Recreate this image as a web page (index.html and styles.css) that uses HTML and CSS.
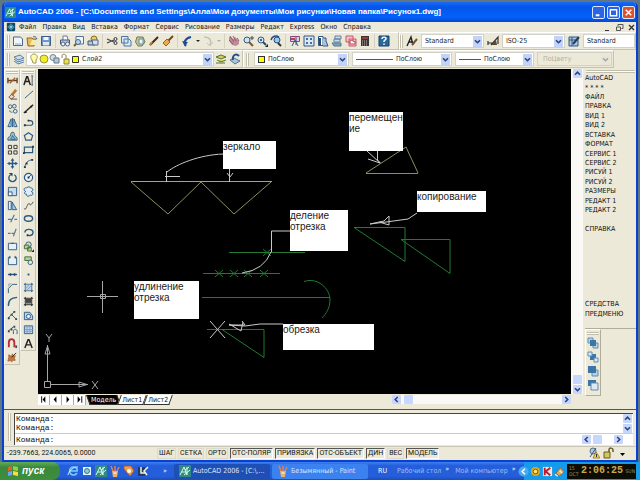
FILE: index.html
```
<!DOCTYPE html>
<html lang="ru">
<head>
<meta charset="utf-8">
<title>AutoCAD 2006</title>
<link rel="stylesheet" href="styles.css">
</head>
<body>
<svg class="defs" aria-hidden="true">
  <symbol id="down" viewBox="0 0 9 9"><path d="M2 3.200 4.500 5.700 7 3.200" fill="none" stroke="#2c4378" stroke-width="1.600"/></symbol>
  <symbol id="up" viewBox="0 0 9 9"><path d="M2 5.700 4.500 3.200 7 5.700" fill="none" stroke="#2c4378" stroke-width="1.600"/></symbol>
  <symbol id="left" viewBox="0 0 9 9"><path d="M5.700 2 3.200 4.500 5.700 7" fill="none" stroke="#2c4378" stroke-width="1.600"/></symbol>
  <symbol id="right" viewBox="0 0 9 9"><path d="M3.200 2 5.700 4.500 3.200 7" fill="none" stroke="#2c4378" stroke-width="1.600"/></symbol>
  <symbol id="acad" viewBox="0 0 12 12"><rect width="12" height="12" fill="#2f8a86"/><path d="M1 10 5 2 8 10M3 7h4M8 2v8M6 5l4-3M5 10l6-5" fill="none" stroke="#d8fbe8" stroke-width="1"/></symbol>
  <symbol id="paint" viewBox="0 0 12 12"><path d="M3 6h6L8 12H4z" fill="#e9b26a"/><path d="M4 6 2 1M6 6V1M8 6l2-4" stroke="#e5804c" stroke-width="1.500"/><path d="M4.500 8h3" stroke="#fff"/></symbol>
</svg>
<div class="window">
  <header class="title">
    <svg class="ic"><use href="#acad"/></svg>
    <h1>AutoCAD 2006 - [C:\Documents and Settings\Алла\Мои документы\Мои рисунки\Новая папка\Рисунок1.dwg]</h1>
    <div class="winbtns">
      <button aria-label="Свернуть"><svg viewBox="0 0 12 12"><path d="M3 9h4" stroke="#fff" stroke-width="2"/></svg></button>
      <button aria-label="Развернуть"><svg viewBox="0 0 12 12"><path d="M2.500 3v6.500h7V3M2 3h8" fill="none" stroke="#fff" stroke-width="1.500"/></svg></button>
      <button class="close" aria-label="Закрыть"><svg viewBox="0 0 12 12"><path d="m3 3 6 6M9 3 3 9" stroke="#fff" stroke-width="1.600"/></svg></button>
    </div>
  </header>
  <nav class="menu">
    <svg class="ic" viewBox="0 0 12 12"><rect x="1" y="1" width="10" height="10" rx="1" fill="#0d4a6c"/><path d="M6 2v8M2 6h8M4 4l4 4M8 4 4 8" stroke="#8fd8e0"/></svg>
    <button>Файл</button><button>Правка</button><button>Вид</button><button>Вставка</button><button>Формат</button><button>Сервис</button><button>Рисование</button><button>Размеры</button><button>Редакт</button><button>Express</button><button>Окно</button><button>Справка</button>
    <div class="docbtns">
      <button aria-label="Свернуть рисунок"><svg viewBox="0 0 9 9"><path d="M2 7.500h4" stroke="#333"/></svg></button>
      <button aria-label="Восстановить рисунок"><svg viewBox="0 0 9 9"><path d="M3 3V1.500h5v4H6.500M1.500 4h4v3.500h-4z" fill="none" stroke="#555"/></svg></button>
      <button aria-label="Закрыть рисунок"><svg viewBox="0 0 9 9"><path d="m2 2 5 5M7 2 2 7" stroke="#333" stroke-width="1.300"/></svg></button>
    </div>
  </nav>

  <div class="bar">
    <div class="strip standard">
      <i class="grip"></i>
      <div class="group">
        <button aria-label="Создать"><svg viewBox="0 0 12 12"><path d="M1.500 2h7l2 2v6.500h-9z" fill="#eef5fc" stroke="#49678f"/><path d="M3 8h6v2H3z" fill="#b9d1ea"/></svg></button>
        <button aria-label="Открыть"><svg viewBox="0 0 12 12"><path d="M1 3h5l1 1h3l-2 7H2z" fill="#e9bd57" stroke="#8f6a23"/><path d="m4 10 2-5h5L9 10z" fill="#fbe9a6"/><path d="M7 2c2-1 3 0 4 2" fill="none" stroke="#315b8e"/></svg></button>
        <button aria-label="Сохранить"><svg viewBox="0 0 12 12"><path d="M1.500 1.500h9v9h-9z" fill="#6f97c8" stroke="#3b5d90"/><path d="M3.500 2h5v3h-5z" fill="#f3f7fb"/><path d="M3 7h6v3.500H3z" fill="#dce7f2"/></svg></button>
      </div>
      <div class="group">
        <button aria-label="Печать"><svg viewBox="0 0 12 12"><path d="M4 5V1h4l1 4" fill="#fff" stroke="#657ba0"/><path d="M1.500 5h9v4h-9z" fill="#b9c8dd" stroke="#415575"/><circle cx="4" cy="9" r="2" fill="#eef" stroke="#526689"/><circle cx="8.500" cy="9" r="2" fill="#eef" stroke="#526689"/></svg></button>
        <button aria-label="Просмотр"><svg viewBox="0 0 12 12"><path d="M3 1.500h7.500V9H3z" fill="#edf4fb" stroke="#58739b"/><circle cx="5" cy="7" r="2.500" fill="#b8d6ef" stroke="#456386"/><path d="m3 9-2 2" stroke="#765b30" stroke-width="2"/></svg></button>
        <button aria-label="Публикация"><svg viewBox="0 0 12 12"><path d="M1 6h7v4H1z" fill="#b9c8dd" stroke="#415575"/><circle cx="7" cy="4" r="3" fill="#e8cc62" stroke="#876e31"/><path d="M5 5h6v5H6z" fill="#d5dfef" stroke="#526689"/></svg></button>
      </div>
      <div class="group">
        <button aria-label="Вырезать"><svg viewBox="0 0 12 12"><path d="m1 4 7 3M1 8l7-3" stroke="#444" stroke-width="1.300"/><circle cx="9.500" cy="4" r="1.500" fill="none" stroke="#334"/><circle cx="9.500" cy="8" r="1.500" fill="none" stroke="#334"/></svg></button>
        <button aria-label="Копировать"><svg viewBox="0 0 12 12"><path d="M1.500 1.500H8V8H1.500zM4 4h5l2 2v5H4z" fill="#dbe9f6" stroke="#5276a1"/></svg></button>
        <button aria-label="Вставить"><svg viewBox="0 0 12 12"><path d="M3 2h6l2 5-3 4H4L1.500 7z" fill="#c5c992" stroke="#6e7c55"/><path d="M5 4h4v5H5z" fill="#eff5fa" stroke="#6888a6"/></svg></button>
        <button aria-label="Свойства слоя"><svg viewBox="0 0 12 12"><path d="m2 10 8-8" stroke="#3d2a18" stroke-width="2"/><path d="m2 10 2-3" stroke="#c48328" stroke-width="2"/></svg></button>
        <button aria-label="Копирование свойств"><svg viewBox="0 0 12 12"><path d="m6 6 5-5" stroke="#6b4724" stroke-width="2"/><path d="m1 8 4-4 3 3-4 4z" fill="#ecae45" stroke="#9b6225"/></svg></button>
      </div>
      <div class="group">
        <button aria-label="Отменить"><svg viewBox="0 0 12 12"><path d="M5 11C2 8 4 3 10 2" fill="none" stroke="#1f4c94" stroke-width="2"/><path d="m1 6 3 5 3-4z" fill="#1f4c94"/></svg></button>
        <button class="dot" aria-label="Список отмены"><svg viewBox="0 0 6 12"><path d="M1 5h4L3 7z" fill="#222"/></svg></button>
        <button aria-label="Вернуть"><svg viewBox="0 0 12 12"><path d="M2 2c6 0 8 4 6 8" fill="none" stroke="#c4c3bb" stroke-width="1.500"/><path d="m5 8 3 3 3-4" fill="none" stroke="#c4c3bb"/></svg></button>
        <button class="dot" aria-label="Список возврата"><svg viewBox="0 0 6 12"><path d="M1 5h4L3 7z" fill="#aaa"/></svg></button>
      </div>
      <div class="group">
        <button aria-label="Панорамирование"><svg viewBox="0 0 12 12"><path d="m1 2 2 0 2 2 2-2 4 4v3l-3 2-4-1-3-4z" fill="#c08a97"/><path d="m2 1 4 6M5 1l3 5M1 5l4 4M9 3l2 3" stroke="#8a5c74"/></svg></button>
        <button aria-label="Зумирование"><svg viewBox="0 0 12 12"><circle cx="5" cy="5" r="3" fill="#cce3f4" stroke="#385a83"/><path d="m7 7 4 4" stroke="#7a592d" stroke-width="2"/><path d="M10 1v4M8 3h4" stroke="#394b66"/></svg></button>
        <button aria-label="Зумирование рамкой"><svg viewBox="0 0 12 12"><circle cx="5" cy="5" r="3" fill="#cce3f4" stroke="#385a83"/><path d="M4 4h2v2H4z" fill="#3e6b99"/><path d="m7 7 3 3" stroke="#38465f" stroke-width="2"/><path d="M12 9v3H9z" fill="#222"/></svg></button>
        <button aria-label="Предыдущий вид"><svg viewBox="0 0 12 12"><circle cx="7" cy="5" r="3" fill="#9bc7ea" stroke="#294d78"/><path d="m8 8 3 3" stroke="#333" stroke-width="2"/><path d="M1 5c1-4 5-5 8-3" fill="none" stroke="#244d86" stroke-width="1.500"/></svg></button>
      </div>
      <div class="group">
        <button aria-label="Свойства"><svg viewBox="0 0 12 12"><path d="M1.500 1.500h9v5h-9z" fill="#e8cce2" stroke="#7e4d85"/><path d="M2 3h4v2H2z" fill="#cc3b55"/><path d="m3 11 3-6 3 6M7 2v8" fill="none" stroke="#315787"/></svg></button>
        <button aria-label="Центр управления"><svg viewBox="0 0 12 12"><path d="M1 1h10v10H1z" fill="#dae7f5" stroke="#37587f"/><path d="M3 3h2v2H3zm4 0h2v2H7zM3 7h2v2H3zm4 0h2v2H7z" fill="#476f9d"/></svg></button>
        <button aria-label="Палитры"><svg viewBox="0 0 12 12"><path d="M1.500 1.500H6v9H1.500z" fill="#fff" stroke="#315787"/><path d="M6 3h3v3l2 5H6" fill="#a6c3e3" stroke="#315787"/><path d="M3 3v7" stroke="#234b7c" stroke-width="2"/></svg></button>
        <button aria-label="Подшивки"><svg viewBox="0 0 12 12"><path d="M4 1h6v3H4zM3 4h6v3H3z" fill="#d0ddea" stroke="#5f83a8"/><path d="M1 8h9v3H3z" fill="#7fa5b8" stroke="#54788d"/></svg></button>
        <button aria-label="Пометки"><svg viewBox="0 0 12 12"><path d="M1 1h7v6H1zM4 4h7v7H4z" fill="#f4c5cb" stroke="#c75669"/><path d="M5 6c2-2 4 2 5 0v3H5z" fill="#fff" stroke="#bb4252"/></svg></button>
        <button aria-label="Калькулятор"><svg viewBox="0 0 12 12"><path d="M2 1h8v10H2z" fill="#3b3434"/><path d="M3 2h6v2H3z" fill="#9b3940"/><path d="M3 6h6M3 8h6M3 10h6" stroke="#bab5b0" stroke-dasharray="1 1"/></svg></button>
      </div>
      <div class="group last">
        <button aria-label="Справка"><svg viewBox="0 0 12 12"><path d="M1 1h10v10H1z" fill="#286a9c" stroke="#173f70"/><path d="M4 4c0-3 5-2 4 0L6 6v1M6 8.500V10" fill="none" stroke="#fff" stroke-width="1.400"/></svg></button>
      </div>
    </div>
    <div class="strip styles">
      <i class="grip"></i>
      <label for="ts" aria-label="Стиль текста"><svg viewBox="0 0 12 12"><path d="m1 11 4-9 2 8M3 7h4" fill="none" stroke="#222" stroke-width="1.400"/><path d="m6 10 5-6" stroke="#765332" stroke-width="2"/></svg></label>
      <span class="combo w63"><select id="ts"><option>Standard</option></select><svg class="arr"><use href="#down"/></svg></span>
      <label for="ds" aria-label="Размерный стиль"><svg viewBox="0 0 12 12"><path d="M1 8h8M1 6v4M4 10l7-8v7" fill="none" stroke="#333" stroke-width="1.200"/><path d="m4 10 5-5 1 5z" fill="#5b4939"/></svg></label>
      <span class="combo w63"><select id="ds"><option>ISO-25</option></select><svg class="arr"><use href="#down"/></svg></span>
      <label for="tb" aria-label="Стиль таблиц"><svg viewBox="0 0 12 12"><path d="M1 2h9v9H1z" fill="#a9c8e6" stroke="#315985"/><path d="M1 5h9M4 2v9" stroke="#315985"/><path d="m5 9 6-7" stroke="#293b55" stroke-width="2"/></svg></label>
      <span class="combo grow"><select id="tb"><option>Standard</option></select></span>
    </div>
  </div>

  <div class="bar">
    <div class="strip layers">
      <i class="grip"></i>
      <button aria-label="Слои"><svg viewBox="0 0 12 12"><path d="m1 4 6-2 4 3-6 2zM1 6l4 3 6-2M1 8l4 3 6-2" fill="#c8dceb" stroke="#5d82a5"/></svg></button>
      <span class="combo layer">
        <svg class="state" viewBox="0 0 50 12"><path d="M3 7C0 3 3 1 5 1s5 2 2 6v3H4z" fill="#fffba7" stroke="#9a965a"/><circle cx="15" cy="6" r="4" fill="#f4ec27" stroke="#99963a"/><circle cx="24" cy="4.500" r="3" fill="#d3dde2" stroke="#71858f"/><path d="M25 5h5v5h-5z" fill="#b6c9d6" stroke="#607888"/><path d="M33 5V3c0-3 5-2 4 1v2" fill="none" stroke="#8c8440"/><path d="M35 6h5v5h-5z" fill="#e7e146" stroke="#8c8440"/><path d="M43.500 3.500h6v6h-6z" fill="#ff0" stroke="#333"/></svg>
        <select aria-label="Слой"><option>Слой2</option></select><svg class="arr"><use href="#down"/></svg></span>
      <button aria-label="Сделать слой текущим"><svg viewBox="0 0 12 12"><path d="m1 4 5-2 5 2-5 2zM2 7l4 2 5-2M1 10h9" fill="#d9cc57" stroke="#51733b"/></svg></button>
      <button aria-label="Предыдущий слой"><svg viewBox="0 0 12 12"><path d="m1 7 4-2 6 3-5 3z" fill="#a9c4dd" stroke="#557693"/><path d="M4 7C3 2 7 0 10 3" fill="none" stroke="#26508d" stroke-width="2"/></svg></button>
    </div>
    <div class="strip props">
      <i class="grip"></i>
      <span class="combo color"><i class="swatch"></i><select aria-label="Цвет"><option>ПоСлою</option></select><svg class="arr"><use href="#down"/></svg></span>
      <span class="combo ltype"><i class="line"></i><select aria-label="Тип линии"><option>ПоСлою</option></select><svg class="arr"><use href="#down"/></svg></span>
      <span class="combo lweight"><i class="line"></i><select aria-label="Вес линии"><option>ПоСлою</option></select><svg class="arr"><use href="#down"/></svg></span>
      <span class="combo plot"><select aria-label="Стиль печати" disabled><option>ПоЦвету</option></select><svg class="arr"><use href="#down"/></svg></span>
    </div>
  </div>

  <main class="work">
    <div class="tools modify">
      <i class="hgrip"></i>
      <div class="tgrid">
        <button aria-label="Размер"><svg viewBox="0 0 12 12"><path d="M1 3v6M11 3v6M1 6h10" stroke="#654027" stroke-width="1.500"/><path d="m3 9 6-6" stroke="#a5622e" stroke-width="1.500"/></svg></button>
        <button aria-label="Стереть"><svg viewBox="0 0 12 12"><path d="m5 7 5-6" stroke="#b77a30" stroke-width="3"/><path d="m2 9 3-3 3 2-3 3z" fill="#eee1c8" stroke="#7a4a3b"/><path d="M4 11h7" stroke="#444"/></svg></button>
        <button aria-label="Копировать объект"><svg viewBox="0 0 12 12"><circle cx="3.500" cy="4" r="2"/><circle cx="8" cy="3.500" r="2"/><circle cx="9" cy="9" r="2"/><path d="M3 8c0 2 1 2 3 2"/></svg></button>
        <button aria-label="Зеркало"><svg viewBox="0 0 12 12"><path d="M4.500 2v8.500H1zM7.500 2v8.500H11z" fill="#b8cde2"/><path d="M6 1v10"/></svg></button>
        <button aria-label="Подобие"><svg viewBox="0 0 12 12"><path d="M1 10V8c0-2 3-1 3-4 0-4 5-3 4 0 0 2 3 2 3 4v2z" fill="#9bc8cb"/><path d="M4 9c0-2 2-1 2-4 1 3 3 2 3 4z"/></svg></button>
        <button aria-label="Массив"><svg viewBox="0 0 12 12"><path d="M1.500 1.500H5V5H1.500zM7.500 1.500H11V5H7.500zM1.500 7.500H5V11H1.500zM7.500 7.500H11V11H7.500z" stroke="#333"/></svg></button>
        <button aria-label="Перенести"><svg viewBox="0 0 12 12"><path d="M6 2v8M2 6h8" stroke-width="1.500"/><path d="m6 0 2 3H4zM6 12l2-3H4zM0 6l3-2v4zM12 6 9 4v4z" fill="#245b91" stroke="none"/></svg></button>
        <button aria-label="Повернуть"><svg viewBox="0 0 12 12"><path d="M4 3a4 4 0 1 0 4 0" stroke-width="1.500"/><path d="M2 1h4v4z" fill="#244" stroke="none"/></svg></button>
        <button aria-label="Масштаб"><svg viewBox="0 0 12 12"><path d="M1.500 1.500h9v9h-9z" fill="#c5dcef"/><path d="M1.500 6.500h4v4h-4z" fill="#fff"/></svg></button>
        <button aria-label="Растянуть"><svg viewBox="0 0 12 12"><path d="M1.500 1.500h3v9h-3z" fill="#eaf3fa"/><path d="M5.500 2v8.500h5z" fill="#a8c7e1"/></svg></button>
        <button aria-label="Обрезать"><svg viewBox="0 0 12 12"><path d="M1 7h4M8 7h3M4 10l4-8" stroke="#4b7ba2" stroke-width="1.300"/></svg></button>
        <button aria-label="Удлинить"><svg viewBox="0 0 12 12"><path d="M1 7h3M5 7h3M7 10l3-8" stroke="#5f7990" stroke-width="1.300"/></svg></button>
        <button aria-label="Разорвать в точке"><svg viewBox="0 0 12 12"><path d="M1.500 2.500h9v7h-9z" fill="#e6f0f8"/><path d="M5 2.500h2" stroke="#334"/></svg></button>
        <button aria-label="Разорвать"><svg viewBox="0 0 12 12"><path d="M4 2.500H1.500v8h9v-8H8" fill="#e6f0f8"/><path d="M3 1v3M9 1v3"/></svg></button>
        <button aria-label="Соединить"><svg viewBox="0 0 12 12"><path d="M1 6h10" stroke-width="1.500"/><path d="m6 6-3-2v4zM6 6l3-2v4z" fill="#234d77" stroke="none"/></svg></button>
        <button aria-label="Фаска"><svg viewBox="0 0 12 12"><path d="M1.500 11V6L6 1.500h5"/><path d="M2 4V1h3" stroke="#999"/></svg></button>
        <button aria-label="Сопряжение"><svg viewBox="0 0 12 12"><path d="M1.500 11c0-7 3-9 9.500-9.500" stroke-width="1.500"/></svg></button>
        <button aria-label="Полилиния"><svg viewBox="0 0 12 12"><path d="m1 9 4-4 5 5M5 5l3-3"/><path d="M1 8h2v2H1zM4 4h2v2H4zM7 1h2v2H7zM9 9h2v2H9z" fill="#345" stroke="none"/></svg></button>
        <button aria-label="Сплайн"><svg viewBox="0 0 12 12"><path d="m1 8 6-5M7 11V8c0-3 4-3 4 0v3"/><path d="M1 7h2v2H1zM4 5h2v2H4zM7 2h2v2H7z" fill="#345" stroke="none"/></svg></button>
        <button aria-label="Привязка"><svg viewBox="0 0 12 12"><path d="M2 10V5c0-5 6-5 6 0v5" stroke="#b22e38" stroke-width="2"/><path d="M10 8v3" stroke="#357" stroke-width="2"/></svg></button>
        <button aria-label="Расчленить"><svg viewBox="0 0 12 12"><path d="m2 3 3 2 1-3 1 3 2-1-1 3 1 2-3 0-1 2-1-2-3 1 1-4z" fill="#c97836" stroke="#a8643a"/><path d="m5 6 5-5" stroke="#222"/></svg></button>
      </div>
    </div>
    <div class="tools draw">
      <i class="hgrip"></i>
      <div class="tgrid">
        <button aria-label="Текст"><svg viewBox="0 0 12 12"><path d="m1 11 3-9h1l3 9M2 7h5" stroke="#222" stroke-width="1.600"/><path d="M10 1v10M9 1h2M9 11h2" stroke="#456"/></svg></button>
        <button aria-label="Отрезок"><svg viewBox="0 0 12 12"><path d="m2 10 9-8"/></svg></button>
        <button aria-label="Прямая"><svg viewBox="0 0 12 12"><path d="m1 11 10-9" stroke="#222" stroke-width="1.500"/><path d="M2 9h2v2H2zM8 3h2v2H8z" fill="#222" stroke="none"/></svg></button>
        <button aria-label="Полилиния"><svg viewBox="0 0 12 12"><path d="M1 9h7c4 0 3-5 0-5H6" stroke-width="1.300"/><path d="M1 8h2v2H1zM5 3h2v2H5z" fill="#234" stroke="none"/></svg></button>
        <button aria-label="Многоугольник"><svg viewBox="0 0 12 12"><path d="m6 2 4.500 3L9 10H3L1.500 5z" stroke-width="1.300"/></svg></button>
        <button aria-label="Прямоугольник"><svg viewBox="0 0 12 12"><path d="M1.500 3.500h9v6h-9z" stroke-width="1.300"/><path d="M0 9h2v2H0zM10 2h2v2h-2z" fill="#234" stroke="none"/></svg></button>
        <button aria-label="Дуга"><svg viewBox="0 0 12 12"><path d="M2 11C2 6 5 2 11 2"/><path d="M1 9h2v2H1zM3 5h2v2H3zM9 1h2v2H9z" fill="#234" stroke="none"/></svg></button>
        <button aria-label="Круг"><svg viewBox="0 0 12 12"><circle cx="6" cy="6" r="4.500" fill="#e5f0f8" stroke-width="1.300"/><path d="m6 6 3-3"/><path d="M5 5h2v2H5z" fill="#234" stroke="none"/></svg></button>
        <button aria-label="Облако"><svg viewBox="0 0 12 12"><path d="M3 6C0 5 1 1 4 2c2-2 4-1 4 0 4 0 3 4 1 4 3 1 2 5-1 4-2 2-5 1-4-1-3 0-3-2-1-3z" fill="#dfedf8"/></svg></button>
        <button aria-label="Сплайн"><svg viewBox="0 0 12 12"><path d="M1 9c3 4 3-6 6-5 1 3 3 0 4-2" stroke="#444"/></svg></button>
        <button aria-label="Эллипс"><svg viewBox="0 0 12 12"><ellipse cx="6" cy="6" rx="4.500" ry="3" stroke-width="1.600"/></svg></button>
        <button aria-label="Дуга эллипса"><svg viewBox="0 0 12 12"><path d="M2 6c0-5 9-4 9 0 0 3-4 4-6 3" stroke-width="1.500"/><path d="M4 8h2v2H4z" fill="#234" stroke="none"/></svg></button>
        <button aria-label="Вставить блок"><svg viewBox="0 0 12 12"><circle cx="6" cy="4" r="3" fill="#d5dfc5"/><path d="M1.500 4.500h5v4h-5zM5 7h4v4H5z" fill="#b9d08f" stroke="#416b3d"/><path d="M12 9v3H9z" fill="#222" stroke="none"/></svg></button>
        <button aria-label="Создать блок"><svg viewBox="0 0 12 12"><path d="M2 2h7v4H2z" fill="#b9d08f" stroke="#416b3d"/><circle cx="8" cy="8" r="2.500" fill="#dcebc8"/></svg></button>
        <button aria-label="Точка"><svg viewBox="0 0 12 12"><path d="M5 5h2v2H5z" fill="#234d7c" stroke="none"/></svg></button>
        <button aria-label="Штриховка"><svg viewBox="0 0 12 12"><path d="M2.500 1v10M9.500 1v10M1 2.500h10M1 9.500h10" /><path d="M3 3h6v6H3z" fill="#bcd4e8" stroke="none"/><path d="m3 7 4-4M4 9l5-5" stroke="#7fa5c6"/></svg></button>
        <button aria-label="Градиент"><svg viewBox="0 0 12 12"><path d="M2.500 1v10M9.500 1v10M1 2.500h10M1 9.500h10" stroke="#222"/><path d="M3 3h6v6H3z" fill="#444" stroke="none"/><path d="M3 8h6" stroke="#aaa"/></svg></button>
        <button aria-label="Область"><svg viewBox="0 0 12 12"><path d="M1.500 2.500h6l3 4v4h-9z" fill="#bcd4e8"/><circle cx="6" cy="7" r="2.300" fill="#eef"/></svg></button>
        <button aria-label="Таблица"><svg viewBox="0 0 12 12"><path d="M1.500 2h9v8.500h-9z" fill="#c5daf0"/><path d="M1.500 3h9M1.500 6h9M1.500 8h9M4.500 3v7M7.500 3v7" stroke="#7f9fc3"/></svg></button>
        <button aria-label="Многострочный текст"><svg viewBox="0 0 12 12"><path d="m2 11 3.500-9h1L10 11M3 7.500h6" stroke="#222" stroke-width="1.600"/></svg></button>
      </div>
    </div>

    <section class="doc">
      <div class="canvas">
        <svg class="drawing" width="533" height="326" viewBox="38 69 533 326" fill="none">
          <g stroke="#8f8b5c"><path d="M131 181.500h141" stroke="#aaa46c"/><path d="m131 182 37 32 33-32 33 32 37-32M366 173.500h52M366 173l40-26 12 26"/></g>
          <g stroke="#217a30"><path d="M354 227.500h51v34zM401 239.500h49v34zM229 252.500h76M203 273.500h77M202 297.500h128M207 329.500h57v28l-42-28"/><path d="M304 281.500C317 277 330 288 330 300c0 8-4 14-8 18"/><path d="m215 270 8 7m0-7-8 7m15-7 8 7m0-7-8 7m14-7 8 7m0-7-8 7m16-7 8 7m0-7-8 7M263 249l8 7m0-7-8 7"/></g>
          <g stroke="#c9c9c9"><path d="M223 154c-24 1-46 10-56 18M166.500 171v11M165 176.500h15M229.500 169v13M227 173l3 4 3-4M367 151l13 12M368 159l12 4M377.500 151v9l3 3M417 213l-9 6-22 3-16 2 14-3 5-5v9l-10-3M271.500 252v-21h19M271 252q-7 18-29 21M283 324h-23l-15 2-16-1h16l-3-4m-13 3 12 7 2-9M210 321l15 17m0-17-15 17"/></g>
          <g stroke="#a6a6a6"><path d="M102.500 281v32M87 296.500h31M100.500 294.500h5v4h-5z"/><path d="M44.500 381.500h6v6h-6zM47.500 381v-36M51 384.500h37M45 354l2.500-8 2.500 8zM79 382l8 2.500-8 2.500zM46 334l3 4 3-4M49 338v4M92 381l6 8m0-8-6 8"/></g>
        </svg>
        <p class="note n1">зеркало</p>
        <p class="note n2">перемещение</p>
        <p class="note n3">копирование</p>
        <p class="note n4">деление отрезка</p>
        <p class="note n5">удлинение отрезка</p>
        <p class="note n6">обрезка</p>
      </div>
      <div class="vscroll"><button aria-label="Вверх"><svg><use href="#up"/></svg></button><span class="space"></span><i class="thumb"></i><button aria-label="Вниз"><svg><use href="#down"/></svg></button></div>
      <div class="tabs">
        <button aria-label="Первый лист"><svg viewBox="0 0 12 9"><path d="M4 1v7" stroke="#000"/><path d="M8 1v7L5 4.500z"/></svg></button>
        <button aria-label="Предыдущий лист"><svg viewBox="0 0 12 9"><path d="M7 1v7L4 4.500z"/></svg></button>
        <button aria-label="Следующий лист"><svg viewBox="0 0 12 9"><path d="M5 1v7l3-3.500z"/></svg></button>
        <button aria-label="Последний лист"><svg viewBox="0 0 12 9"><path d="M4 1v7l3-3.500zM8 1h1v7H8z"/></svg></button>
        <a href="#model" class="tab on">Модель</a><a href="#l1" class="tab">Лист1</a><a href="#l2" class="tab">Лист2</a>
        <div class="hscroll"><button aria-label="Влево"><svg><use href="#left"/></svg></button><i class="thumb"></i><span class="space"></span><button aria-label="Вправо"><svg><use href="#right"/></svg></button></div>
      </div>
    </section>

    <aside class="side">
      <i class="hgrip"></i>
      <div class="screenmenu">
        <button>AutoCAD</button><button class="stars">* * * *</button><button>ФАЙЛ</button><button>ПРАВКА</button><button>ВИД 1</button><button>ВИД 2</button><button>ВСТАВКА</button><button>ФОРМАТ</button><button>СЕРВИС 1</button><button>СЕРВИС 2</button><button>РИСУЙ 1</button><button>РИСУЙ 2</button><button>РАЗМЕРЫ</button><button>РЕДАКТ 1</button><button>РЕДАКТ 2</button><span></span><button>СПРАВКА</button><span class="blank"></span><button>СРЕДСТВА</button><button>ПРЕДМЕНЮ</button>
      </div>
      <div class="order">
        <i class="hgrip"></i>
        <button aria-label="На передний план"><svg viewBox="0 0 12 12"><path d="M1 1h5v5H1zM6 6h5v5H6z" fill="#b9d3e6" stroke="#5f8db3"/><path d="M3 3h6v6H3z" fill="#3b77a6"/></svg></button>
        <button aria-label="На задний план"><svg viewBox="0 0 12 12"><path d="M3 3h6v6H3z" fill="#3b77a6"/><path d="M1 1h4v4H1zM7 7h4v4H7z" fill="#dce9f2" stroke="#5f8db3"/></svg></button>
        <button aria-label="Поверх объекта"><svg viewBox="0 0 12 12"><path d="M5 5h6v6H5z" fill="#b9d3e6" stroke="#5f8db3"/><path d="M1 1h8v7H1z" fill="#3b77a6"/></svg></button>
        <button aria-label="Под объект"><svg viewBox="0 0 12 12"><path d="M1 1h8v6H1z" fill="#3b77a6"/><path d="M4 4h7v7H4z" fill="#dce9f2" stroke="#5f8db3"/></svg></button>
      </div>
    </aside>
  </main>

  <section class="command">
    <i class="grip"></i>
    <div class="cmdbox">
      <div class="log"><p>Команда:</p><p>Команда:</p>
        <div class="logscroll"><button aria-label="Вверх"><svg><use href="#up"/></svg></button><button aria-label="Вниз"><svg><use href="#down"/></svg></button></div></div>
      <div class="entry"><label for="cmd">Команда:</label><input id="cmd" type="text">
        <div class="entryscroll"><button aria-label="Влево"><svg><use href="#left"/></svg></button><i class="thumb"></i><span class="space"></span><button aria-label="Вправо"><svg><use href="#right"/></svg></button></div></div>
    </div>
  </section>

  <footer class="status">
    <output>-239.7663, 224.0065, 0.0000</output>
    <button>ШАГ</button><button>СЕТКА</button><button>ОРТО</button><button class="on">ОТС-ПОЛЯР</button><button class="on">ПРИВЯЗКА</button><button class="on">ОТС-ОБЪЕКТ</button><button class="on">ДИН</button><button>ВЕС</button><button class="on">МОДЕЛЬ</button>
    <div class="stray">
      <svg class="ic" viewBox="0 0 12 12"><circle cx="5" cy="4" r="3" fill="#b7c6d6" stroke="#566f91"/><path d="m2 10 6-9" stroke="#315b8e"/><path d="m8 5 4 6H5z" fill="#f3d73c" stroke="#a9851c"/><path d="M8.500 7v3" stroke="#333"/></svg>
      <svg class="ic" viewBox="0 0 12 12"><path d="M7 5V3c0-3 4-2 4 0v2" fill="none" stroke="#655c28" stroke-width="1.500"/><path d="M2 5h6v6H2z" fill="#d6c554" stroke="#655c28"/></svg>
      <svg class="ic" viewBox="0 0 12 12"><path d="M4 6h5L6.500 9z"/></svg>
    </div>
  </footer>
</div>

<div class="taskbar">
  <button class="start"><svg viewBox="0 0 12 12"><path d="m1 2 4-1v4l-4 1z" fill="#f25c2d"/><path d="m6 1 5 1v4L6 5z" fill="#8dd44b"/><path d="m1 7 4-1v4l-4 1z" fill="#6ba6ff"/><path d="m6 6 5 1v4l-5-1z" fill="#ffda3c"/></svg>пуск</button>
  <div class="quick">
    <button aria-label="Internet Explorer"><svg viewBox="0 0 12 12"><path d="M10 8a4 4 0 1 1 0-4v2H3" fill="none" stroke="#75ceff" stroke-width="1.600"/><path d="M1 10C1 7 7 1 11 2" fill="none" stroke="#d2eeff"/></svg></button>
    <button aria-label="Рабочий стол"><svg viewBox="0 0 12 12"><path d="M2 2h8v8H2z" fill="#e2f4f5"/><circle cx="6" cy="6" r="2.500" fill="#91cad7" stroke="#2d789b"/></svg></button>
    <button aria-label="AutoCAD"><svg><use href="#acad"/></svg></button>
    <button aria-label="Paint"><svg><use href="#paint"/></svg></button>
    <button aria-label="Проигрыватель"><svg viewBox="0 0 12 12"><path d="M1 1h7l3 5-4 5-6-7z" fill="#ef9e4a" stroke="#b05c2d"/><circle cx="6" cy="6" r="2" fill="#fff"/></svg></button>
    <button aria-label="Редактор"><svg viewBox="0 0 12 12"><path d="M1 2h7v9H1z" fill="#263b5c"/><path d="M4 2v6h4M11 2 7 6l3 4" fill="none" stroke="#edf2e2" stroke-width="1.500"/></svg></button>
  </div>
  <span class="more">»</span>
  <button class="task on"><svg><use href="#acad"/></svg>AutoCAD 2006 - [C:\,...</button>
  <button class="task"><svg><use href="#paint"/></svg>Безымянный - Paint</button>
  <span class="lang">RU</span>
  <a class="desk" href="#desk">Рабочий стол</a><span class="more2">»</span>
  <a class="desk" href="#pc">Мой компьютер</a><span class="more2">»</span>
  <div class="tray">
    <button aria-label="Скрытые значки"><svg viewBox="0 0 12 12"><circle cx="6" cy="6" r="5.500" fill="#4aaaf0"/><path d="M7.500 3 4.500 6l3 3" fill="none" stroke="#fff" stroke-width="1.600"/></svg></button>
    <svg class="ic" viewBox="0 0 12 12"><circle cx="6" cy="6" r="5" fill="#e1a625"/><circle cx="6" cy="6" r="2.500" fill="#ffe47a" stroke="#754a1b"/></svg>
    <svg class="ic" viewBox="0 0 12 12"><path d="M1 1h10v10H1z" fill="#efe6e6"/><path d="M3 2v8M9 2 4 6l5 4" fill="none" stroke="#ba1c28" stroke-width="2"/></svg>
    <svg class="ic" viewBox="0 0 12 12"><path d="m2 8 5-6 4 4-5 5z" fill="#d9ad61" stroke="#9c6335"/><path d="m1 9 3 2M6 5l3 3" stroke="#f4eede" stroke-width="1.500"/></svg>
    <time class="clock"><small class="date"><span>15</span><span>OCT</span></small><b>2:06:25</b><small>SUN</small></time>
  </div>
</div>
</body>
</html>
```
FILE: styles.css
```
* { box-sizing: border-box; }
html, body { height: 100%; }
body {
  margin: 0;
  display: flex;
  flex-direction: column;
  overflow: hidden;
  background: #5d7785;
  color: #111;
  font: 7px/10px "DejaVu Sans Condensed", "Liberation Sans", sans-serif;
}
button {
  margin: 0;
  padding: 0;
  border: 0;
  background: none;
  color: inherit;
  font: inherit;
  display: flex;
  align-items: center;
  justify-content: center;
  white-space: nowrap;
}
a { color: inherit; text-decoration: none; }
p, h1 { margin: 0; font: inherit; }
i { display: block; flex: none; }
svg { display: block; flex: none; width: 12px; height: 12px; }
.defs { position: absolute; width: 0; height: 0; }

.window {
  flex: 1;
  min-height: 0;
  margin: 2px 2px 0;
  display: flex;
  flex-direction: column;
  background: #ece9d8;
  border: solid #0a3fd0;
  border-width: 0 2px 2px;
  border-radius: 5px 5px 0 0;
  overflow: hidden;
}
.title {
  flex: none;
  height: 20px;
  padding: 0 0 0 1px;
  display: flex;
  align-items: center;
  gap: 2px;
  background: linear-gradient(#1c6af0, #0255e8 25%, #0561fa 75%, #0348d0);
  color: #fff;
}
.title svg { width: 11px; height: 11px; }
.title h1 { flex: 1; overflow: hidden; white-space: nowrap; font: bold 8px/12px "Liberation Sans", sans-serif; }
.winbtns { display: flex; gap: 2px; padding-right: 1px; }
.winbtns button { width: 13px; height: 13px; border: 1px solid #dbe6ff; border-radius: 2px; background: #2b64e4; }
.winbtns .close { background: #dd512c; }

.menu { flex: none; height: 10px; padding-left: 2px; display: flex; align-items: center; gap: 6px; }
.menu .ic { margin-right: -3px; width: 10px; height: 10px; }
.docbtns { margin-left: auto; display: flex; gap: 3px; }
.docbtns svg { width: 9px; height: 9px; }

.bar { flex: none; display: flex; height: 18px; background: #ece9d8; }
.strip { display: flex; align-items: center; border: 1px solid; border-color: #fff #c5c2b2 #c5c2b2 #fff; padding-left: 3px; }
.grip { width: 3px; height: 13px; border: solid #c1beae; border-width: 0 1px; background: #fff; }
.group { display: flex; padding-right: 2px; margin-right: 2px; border-right: 1px solid #d5d2c3; }
.group.last { border: 0; margin: 0; }
.strip button, .strip label { width: 14px; height: 14px; display: flex; align-items: center; justify-content: center; flex: none; }
.strip .dot { width: 7px; }
.dot svg { width: 6px; }
.standard { width: 395px; padding-left: 2px; }
.standard .grip { margin-right: 1px; }
.styles { flex: 1; gap: 2px; padding-left: 0; }
.layers { width: 239px; padding-left: 2px; }
.layers .grip { margin-right: 2px; }
.props { width: 371px; gap: 3px; padding-left: 2px; }
.props .grip { margin-right: 2px; }

.combo { flex: none; display: flex; align-items: center; height: 14px; background: #fff; border: 1px solid #d3d0c4; padding-right: 1px; }
.combo select {
  flex: 1;
  min-width: 0;
  height: 12px;
  padding: 0 0 0 3px;
  margin: 0;
  border: 0;
  appearance: none;
  background: none;
  color: #222;
  font: inherit;
}
.arr { width: 9px; height: 11px; background: #c1d3fb; pointer-events: none; }
.w63 { width: 63px; }
.grow { flex: 1; min-width: 0; }
.layer { width: 188px; }
.state { width: 50px; height: 12px; margin-left: 2px; }
.color { width: 95px; }
.swatch { width: 7px; height: 7px; margin-left: 3px; background: #ff0; border: 1px solid #333; }
.ltype { width: 100px; }
.lweight { width: 79px; }
.line { width: 37px; height: 1px; margin-left: 3px; background: #555; }
.lweight .line { width: 22px; }
.plot { width: 75px; background: #ece9d8; }
.plot select { color: #b3b09f; opacity: 1; padding-left: 5px; }
.plot .arr { background: #e6e3d4; opacity: .4; }

.work { flex: 1; min-height: 0; display: flex; padding: 1px 0 4px; }
.tools { flex: none; width: 16px; display: flex; flex-direction: column; align-self: flex-start; border: 1px solid; border-color: #fff #c5c2b2 #c5c2b2 #fff; }
.hgrip { height: 3px; margin: 1px 1px 0; border: solid #c1beae; border-width: 1px 0; background: #fff; }
.tgrid { display: grid; grid-auto-rows: 1fr; justify-items: center; }
.modify .tgrid { height: 290px; }
.draw .tgrid { height: 276px; }
.tgrid svg { fill: none; stroke: #2c5a83; width: 11px; height: 11px; }

.doc { flex: 1; min-width: 0; margin-left: 2px; display: grid; grid-template: 1fr 11px / 1fr 12px; }
.canvas { position: relative; background: #000; overflow: hidden; }
.drawing { position: absolute; left: 0; top: 0; width: 533px; height: 326px; }
.note {
  position: absolute;
  background: #fff;
  color: #222;
  font: 10px/11px "Liberation Sans", sans-serif;
  overflow-wrap: anywhere;
}
.n1 { left: 185px; top: 72px; width: 53px; height: 28px; }
.n2 { left: 311px; top: 43px; width: 54px; height: 39px; }
.n3 { left: 379px; top: 122px; width: 69px; height: 21px; }
.n4 { left: 252px; top: 141px; width: 58px; height: 41px; }
.n5 { left: 96px; top: 212px; width: 65px; height: 38px; }
.n6 { left: 245px; top: 255px; width: 91px; height: 26px; }

.vscroll { display: flex; flex-direction: column; align-items: center; gap: 1px; background: #faf9f6; }
.vscroll button, .hscroll button, .logscroll button, .entryscroll button { width: 9px; height: 9px; background: #c6d6fc; border-radius: 1px; }
.vscroll svg, .hscroll svg, .logscroll svg, .entryscroll svg { width: 9px; height: 9px; }
.thumb { width: 9px; height: 9px; background: #c6d6fc; border-radius: 1px; }
.space { flex: 1; }
.tabs { grid-column: 1 / 3; display: flex; align-items: center; }
.tabs > button { width: 12px; height: 10px; background: #fff; border-right: 1px solid #aaa; }
.tabs > button svg { width: 11px; height: 9px; }
.tab { position: relative; z-index: 0; height: 10px; padding: 0 3px; line-height: 10px; }
.tab::before { content: ""; position: absolute; inset: 0; z-index: -1; border: 1px solid #333; border-top: 0; background: #fff; transform: skewX(-20deg); }
.tab.on { margin-left: 2px; color: #fff; }
.tab.on::before { background: #000; transform: skewX(20deg); }
.hscroll { margin-left: auto; margin-right: 12px; width: 179px; display: flex; gap: 3px; background: #faf9f6; }

.side { flex: none; width: 53px; display: flex; flex-direction: column; padding-left: 2px; }
.screenmenu { flex: none; height: 256px; padding: 1px 0 9px; display: grid; grid-template-rows: repeat(26, 1fr); border-bottom: 1px solid #b0ad9e; }
.screenmenu button { justify-content: flex-start; line-height: 9px; }
.screenmenu .blank { grid-row: span 7; }
.order { flex: none; width: 16px; padding: 1px 0 3px; border: 1px solid; border-color: #fff #b0ad9e #b0ad9e #fff; display: flex; flex-direction: column; }
.order .hgrip { margin-bottom: 1px; }
.order button { height: 14px; }

.command { flex: none; height: 37px; display: flex; align-items: flex-start; gap: 3px; padding: 3px 3px 0 4px; border-top: 1px solid #555; font: 8px/9px "Liberation Mono", monospace; }
.command .grip { height: 28px; }
.cmdbox { flex: 1; border: solid #444; border-width: 1px 0 0 1px; background: #fff; }
.log { position: relative; height: 20px; border-bottom: 1px solid #ccc; }
.log p { padding-left: 1px; }
.logscroll { position: absolute; right: 1px; top: 0; display: grid; gap: 1px; }
.entry { height: 11px; display: flex; align-items: center; padding-left: 1px; }
.entry input { flex: 1; min-width: 0; height: 9px; border: 0; padding: 0; background: none; font: inherit; outline: 0; }
.entryscroll { width: 41px; display: flex; gap: 2px; margin-right: 10px; }

.status { flex: none; height: 14px; display: flex; align-items: center; gap: 2px; padding: 0 2px 1px 3px; border-top: 1px solid #c9c6b6; font: 7px/10px Roboto, "Liberation Sans", sans-serif; }
.status output { width: 148px; }
.status button { height: 11px; padding: 0 1px; border: 1px solid #dddaca; }
.status .on { border-color: #555 #fff #fff #555; }
.stray { margin-left: auto; display: flex; gap: 2px; padding-right: 6px; }

.taskbar { flex: none; height: 18px; display: flex; align-items: center; background: linear-gradient(#3c81f3, #245edb 20%, #245edb 80%, #1d4cb5); color: #fff; white-space: nowrap; }
.start { flex: none; width: 60px; height: 18px; gap: 3px; justify-content: flex-start; padding-left: 7px; border-radius: 0 8px 8px 0; background: linear-gradient(#5eac56, #3c873c 30%, #3c8f3c); font: italic bold 10px/14px "Liberation Sans", sans-serif; }
.quick { flex: none; display: flex; gap: 2px; margin-left: 7px; }
.more { flex: none; width: 25px; padding-left: 7px; text-align: center; line-height: 10px; }
.task { flex: none; width: 96px; height: 15px; margin-right: 2px; padding-left: 5px; gap: 2px; justify-content: flex-start; border-radius: 2px; background: #3c81f0; color: #dbe6fb; }
.task.on { background: #1e4fb4; }
.lang { margin: 0 10px 0 8px; }
.desk { color: #9fbdf2; }
.more2 { margin: 0 6px 4px 4px; line-height: 8px; }
.tray { flex: none; margin-left: auto; height: 18px; display: flex; align-items: center; gap: 1px; padding-right: 4px; background: #159bea; }
.tray svg { width: 11px; height: 11px; }
.tray > button { margin-left: -6px; }
.clock { width: 69px; height: 15px; margin-left: 1px; padding: 0 1px 0 2px; display: flex; align-items: center; justify-content: space-between; background: #0d0d08; color: #a38c4f; }
.clock b { font: bold 10px/12px "Liberation Mono", monospace; color: #c9a94e; }
.clock small { font-size: 5px; line-height: 6px; }
.date { display: grid; }
```
